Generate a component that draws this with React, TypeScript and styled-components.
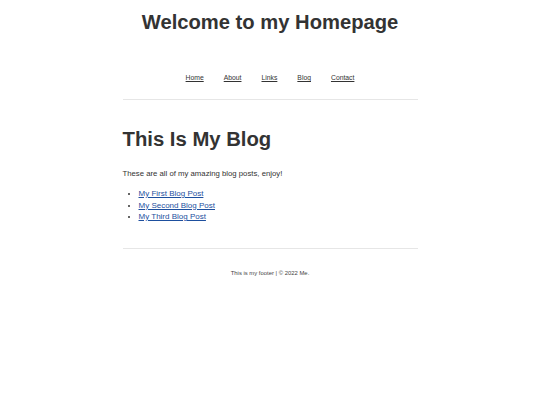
import React from 'react'
import styled, { createGlobalStyle } from 'styled-components'

const GlobalStyle = createGlobalStyle`
  html, body {
    margin: 0;
    padding: 0;
    background: #ffffff;
  }
  body {
    font-family: "Liberation Sans", Arial, Helvetica, sans-serif;
    color: #333333;
  }
`

const Page = styled.div`
  width: 295px;
  margin: 0 auto;
  padding-top: 10px;
`

const SiteTitle = styled.h1`
  margin: 0;
  font-size: 20.2px;
  line-height: 24px;
  font-weight: 700;
  text-align: center;
  color: #333333;
`

const Nav = styled.nav`
  display: flex;
  justify-content: center;
  gap: 20px;
  margin-top: 39px;
  padding-bottom: 17px;
  border-bottom: 1px solid #e6e6e6;
`

const NavLink = styled.a`
  font-size: 6.8px;
  line-height: 9px;
  color: #333333;
  text-decoration: underline;
`

const Main = styled.main`
  padding: 26px 0 25px;
  border-bottom: 1px solid #e6e6e6;
`

const BlogTitle = styled.h2`
  margin: 0;
  font-size: 20.3px;
  line-height: 26px;
  font-weight: 700;
  color: #333333;
`

const Intro = styled.p`
  margin: 16px 0 0;
  font-size: 7.75px;
  line-height: 11px;
`

const PostList = styled.ul`
  margin: 9px 0 0;
  padding-left: 16px;
  font-size: 8px;
  line-height: 11.5px;
`

const PostLink = styled.a`
  color: #1d4f9e;
  text-decoration: underline;
`

const Footer = styled.footer`
  padding-top: 20px;
  text-align: center;
  font-size: 5.9px;
  line-height: 8px;
  color: #444444;
`

const links = ['Home', 'About', 'Links', 'Blog', 'Contact']
const posts = ['My First Blog Post', 'My Second Blog Post', 'My Third Blog Post']

export default function App() {
  return (
    <>
      <GlobalStyle />
      <Page>
        <SiteTitle>Welcome to my Homepage</SiteTitle>
        <Nav>
          {links.map((l) => (
            <NavLink key={l} href="#">{l}</NavLink>
          ))}
        </Nav>
        <Main>
          <BlogTitle>This Is My Blog</BlogTitle>
          <Intro>These are all of my amazing blog posts, enjoy!</Intro>
          <PostList>
            {posts.map((p) => (
              <li key={p}>
                <PostLink href="#">{p}</PostLink>
              </li>
            ))}
          </PostList>
        </Main>
        <Footer>This is my footer | © 2022 Me.</Footer>
      </Page>
    </>
  )
}
